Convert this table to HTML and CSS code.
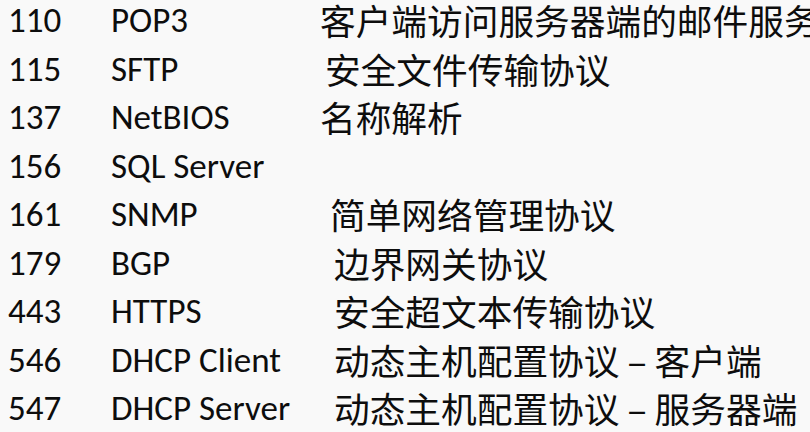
FILE: index.html
```html
<!DOCTYPE html>
<html lang="zh-CN">

<head>
  <meta charset="UTF-8" />
  <meta name="viewport" content="width=device-width, initial-scale=1.0" />
  <title>常用端口</title>
  <link rel="stylesheet" href="styles.css">
</head>

<body>

  <div class="port-list">
    <div class="port-row">
      <span class="port">110</span>
      <span class="proto">POP3</span>
      <span class="desc">客户端访问服务器端的邮件服务器</span>
    </div>
    <div class="port-row">
      <span class="port">115</span>
      <span class="proto">SFTP</span>
      <span class="desc shift-1">安全文件传输协议</span>
    </div>
    <div class="port-row">
      <span class="port">137</span>
      <span class="proto">NetBIOS</span>
      <span class="desc">名称解析</span>
    </div>
    <div class="port-row">
      <span class="port">156</span>
      <span class="proto">SQL Server</span>
      <span class="desc"></span>
    </div>
    <div class="port-row">
      <span class="port">161</span>
      <span class="proto">SNMP</span>
      <span class="desc shift-2">简单网络管理协议</span>
    </div>
    <div class="port-row">
      <span class="port">179</span>
      <span class="proto">BGP</span>
      <span class="desc shift-3">边界网关协议</span>
    </div>
    <div class="port-row">
      <span class="port">443</span>
      <span class="proto">HTTPS</span>
      <span class="desc shift-3">安全超文本传输协议</span>
    </div>
    <div class="port-row">
      <span class="port">546</span>
      <span class="proto">DHCP Client</span>
      <span class="desc shift-3">动态主机配置协议 – 客户端</span>
    </div>
    <div class="port-row">
      <span class="port">547</span>
      <span class="proto">DHCP Server</span>
      <span class="desc shift-3">动态主机配置协议 – 服务器端</span>
    </div>
  </div>

</body>

</html>
```

FILE: styles.css
```css
html,
body {
  margin: 0;
  height: 100%;
  overflow: hidden;
}

body {
  background: #f9f9f9;
  color: #0d0d0d;
  font-family: Carlito, 'Liberation Sans', 'Noto Sans CJK SC', sans-serif;
  font-size: 35px;
}

.port-list {
  margin-top: -4px;
}

.port-row {
  display: grid;
  grid-template-columns: 103px 209px 1fr;
  height: 48.5px;
  line-height: 48.5px;
  padding-left: 8px;
  white-space: nowrap;
}

.desc {
  font-family: 'Noto Sans CJK SC', sans-serif;
  font-size: 35.7px;
}

.shift-1 {
  padding-left: 5px;
}

.shift-2 {
  padding-left: 10px;
}

.shift-3 {
  padding-left: 14px;
}
```
